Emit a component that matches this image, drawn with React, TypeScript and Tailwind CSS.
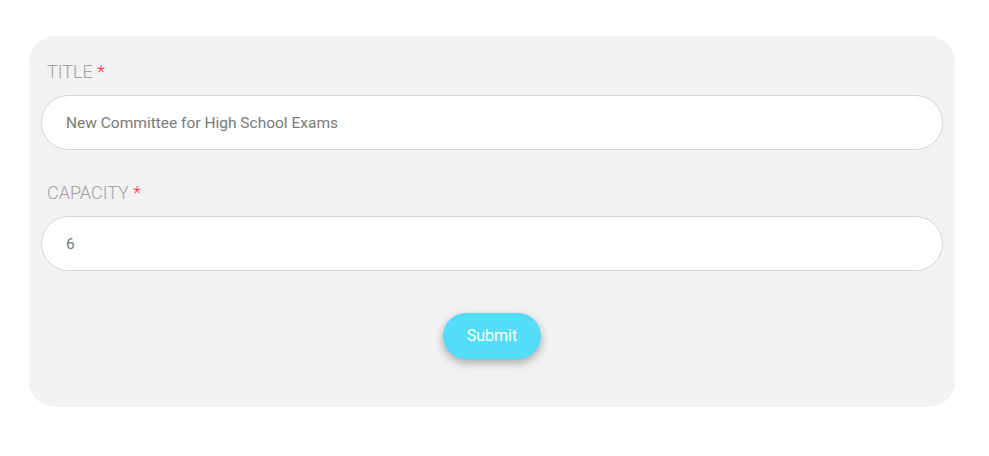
import React from "react";

function Field({ label, value }: { label: string; value: string }) {
  return (
    <div className="flex flex-col">
      <label className="pl-[6px] text-[18px] leading-6 font-light text-[#a0a0a0]">
        {label} <span className="text-[#ff3350]">*</span>
      </label>
      <input
        defaultValue={value}
        className="mt-[11px] h-[55px] w-full rounded-full border border-[#d4d4d4] bg-white px-[24px] text-[15.5px] text-[#7a7a7a] outline-none"
      />
    </div>
  );
}

export default function App() {
  return (
    <div className="min-h-[456px] bg-white pt-[36px] pl-[29px] font-['Roboto',sans-serif]">
      <div className="w-[926px] rounded-[26px] bg-[#f2f2f2] px-[12px] pt-[24px] pb-[48px]">
        <Field label="TITLE" value="New Committee for High School Exams" />
        <div className="mt-[31px]">
          <Field label="CAPACITY" value="6" />
        </div>
        <div className="mt-[42px] flex justify-center">
          <button className="h-[46px] w-[98px] rounded-full bg-[#53ddf8] text-[16px] text-white shadow-[0_4px_10px_rgba(0,0,0,0.3)]">
            Submit
          </button>
        </div>
      </div>
    </div>
  );
}
